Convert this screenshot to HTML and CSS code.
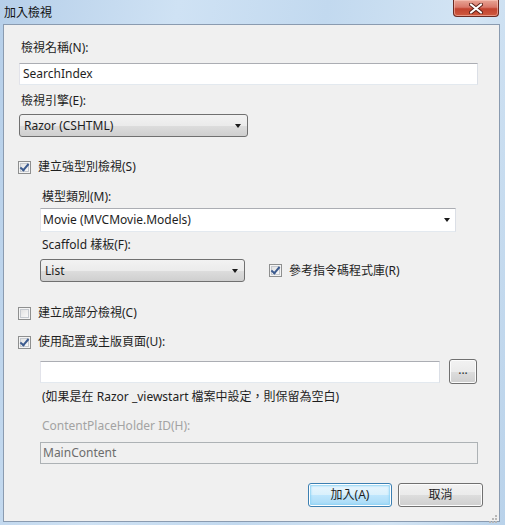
FILE: index.html
```html
<!DOCTYPE html>
<html lang="zh-Hant">
<head>
    <meta charset="UTF-8">
    <title>加入檢視</title>
    <link rel="stylesheet" href="styles.css">
</head>
<body>

    <div class="window">
        <!-- Заголовок окна -->
        <div class="titlebar">
            <span class="title">加入檢視</span>
            <div class="close-btn">
                <svg width="14" height="11" viewBox="0 0 14 11">
                    <path d="M2 1.5 L12 9.5 M12 1.5 L2 9.5" stroke="#5a2018" stroke-width="4" stroke-linecap="round"/>
                    <path d="M2 1.5 L12 9.5 M12 1.5 L2 9.5" stroke="#ffffff" stroke-width="2.2" stroke-linecap="round"/>
                </svg>
            </div>
        </div>

        <!-- Содержимое диалога -->
        <div class="client">
            <div class="lbl">檢視名稱(N):</div>
            <div class="textbox tb-name">SearchIndex</div>

            <div class="lbl lbl-engine">檢視引擎(E):</div>
            <div class="select sel-engine">Razor (CSHTML)<span class="arrow"></span></div>

            <div class="check-row cr-strong">
                <span class="checkbox checked"></span>
                <span>建立強型別檢視(S)</span>
            </div>

            <div class="indent">
                <div class="lbl lbl-model">模型類別(M):</div>
                <div class="combo">Movie (MVCMovie.Models)<span class="arrow"></span></div>

                <div class="lbl lbl-scaffold">Scaffold 樣板(F):</div>
                <div class="row row-scaffold">
                    <div class="select sel-list">List<span class="arrow"></span></div>
                    <div class="check-row cr-script">
                        <span class="checkbox checked"></span>
                        <span>參考指令碼程式庫(R)</span>
                    </div>
                </div>
            </div>

            <div class="check-row cr-partial">
                <span class="checkbox"></span>
                <span>建立成部分檢視(C)</span>
            </div>

            <div class="check-row cr-layout">
                <span class="checkbox checked"></span>
                <span>使用配置或主版頁面(U):</span>
            </div>

            <div class="indent">
                <div class="row row-layout">
                    <div class="textbox tb-layout"></div>
                    <div class="btn btn-browse">...</div>
                </div>
                <div class="lbl lbl-hint">(如果是在 Razor _viewstart 檔案中設定，則保留為空白)</div>

                <div class="lbl lbl-cph disabled">ContentPlaceHolder ID(H):</div>
                <div class="textbox tb-cph disabled">MainContent</div>
            </div>

            <div class="buttons">
                <div class="btn btn-default">加入(A)</div>
                <div class="btn btn-cancel">取消</div>
            </div>

            <div class="grip">
                <svg width="9" height="9" viewBox="0 0 9 9">
                    <rect x="6" y="0" width="2" height="2" fill="#b8b8b8"/>
                    <rect x="3" y="3" width="2" height="2" fill="#b8b8b8"/>
                    <rect x="6" y="3" width="2" height="2" fill="#b8b8b8"/>
                    <rect x="0" y="6" width="2" height="2" fill="#b8b8b8"/>
                    <rect x="3" y="6" width="2" height="2" fill="#b8b8b8"/>
                    <rect x="6" y="6" width="2" height="2" fill="#b8b8b8"/>
                </svg>
            </div>
        </div>
    </div>

</body>
</html>
```

FILE: styles.css
```css
body {
    margin: 0;
    padding: 0;
    font-family: "Noto Sans", "Noto Sans CJK TC", sans-serif;
    font-size: 12px;
    color: #1e1e1e;
}

/* Окно */
.window {
    width: 505px;
    height: 525px;
    display: flex;
    flex-direction: column;
    background: linear-gradient(100deg, #b6cfe9 0%, #cfe2f4 30%, #c2d9ef 55%, #d4e5f4 80%, #b9d2ea 100%);
    overflow: hidden;
}

.titlebar {
    height: 24px;
    display: flex;
    justify-content: space-between;
    align-items: flex-start;
}

.title {
    padding: 5px 0 0 4px;
    font-size: 12px;
    line-height: 16px;
    color: #111;
}

.close-btn {
    width: 46px;
    height: 17px;
    margin-right: 6px;
    box-sizing: border-box;
    border: 1px solid #6b2a22;
    border-top: none;
    border-radius: 0 0 4px 4px;
    background: linear-gradient(#e8a596 0%, #d9786a 45%, #c2432f 55%, #cf5a3f 100%);
    box-shadow: inset 0 0 0 1px rgba(255, 210, 200, 0.5);
    display: flex;
    align-items: center;
    justify-content: center;
}

.client {
    flex: 1;
    margin: 0 5px 3px 3px;
    border: 1px solid #8a9bb0;
    background: #f0f0f0;
    padding: 15px 21px 0 15px;
    position: relative;
}

.lbl {
    line-height: 16px;
    padding-left: 2px;
    white-space: nowrap;
}

.disabled {
    color: #a3a3a3;
}

/* Поля ввода */
.textbox {
    box-sizing: border-box;
    height: 22px;
    background: #fff;
    border: 1px solid;
    border-color: #abadb3 #dbdfe6 #e3e9ef #e2e3ea;
    padding: 0 3px;
    line-height: 20px;
}

.tb-name {
    margin-top: 7px;
}

.lbl-engine {
    margin-top: 8px;
}

.select {
    box-sizing: border-box;
    height: 23px;
    border: 1px solid #707070;
    border-radius: 3px;
    background: linear-gradient(#f2f2f2 0%, #ebebeb 50%, #dddddd 51%, #cfcfcf 100%);
    padding: 0 4px;
    line-height: 21px;
    position: relative;
}

.sel-engine {
    width: 229px;
    margin-top: 5px;
}

.arrow {
    position: absolute;
    right: 6px;
    top: 9px;
    width: 0;
    height: 0;
    border-left: 3.5px solid transparent;
    border-right: 3.5px solid transparent;
    border-top: 4px solid #1a1a1a;
}

.combo {
    box-sizing: border-box;
    width: 416px;
    height: 24px;
    margin-top: 3px;
    background: #fff;
    border: 1px solid;
    border-color: #abadb3 #dbdfe6 #e3e9ef #e2e3ea;
    padding: 0 2px;
    line-height: 22px;
    position: relative;
}

.combo .arrow {
    right: 5px;
}

/* Флажки */
.check-row {
    display: flex;
    align-items: center;
    height: 16px;
    line-height: 16px;
    white-space: nowrap;
}

.checkbox {
    box-sizing: border-box;
    width: 13px;
    height: 13px;
    margin-left: -1px;
    margin-right: 7px;
    border: 1px solid #8e8f8f;
    background: linear-gradient(135deg, #dcdcdc, #ffffff);
    box-shadow: inset 0 0 0 1px #f4f4f4, inset 0 0 0 2px #c5c9cf;
    position: relative;
}

.checkbox.checked::after {
    content: "";
    position: absolute;
    left: 3px;
    top: 0px;
    width: 3px;
    height: 7px;
    border-right: 2px solid #3c5b8f;
    border-bottom: 2px solid #3c5b8f;
    transform: rotate(40deg);
}

.cr-strong {
    margin-top: 22px;
}

.indent {
    margin-left: 21px;
}

.lbl-model {
    margin-top: 14px;
}

.lbl-scaffold {
    margin-top: 5px;
}

.row {
    display: flex;
    align-items: center;
}

.row-scaffold {
    margin-top: 6px;
}

.sel-list {
    width: 205px;
}

.cr-script {
    margin-left: 25px;
}

.cr-partial {
    margin-top: 23px;
}

.cr-layout {
    margin-top: 13px;
}

.row-layout {
    margin-top: 9px;
    height: 25px;
}

.tb-layout {
    width: 400px;
}

/* Кнопки */
.btn {
    box-sizing: border-box;
    border: 1px solid #707070;
    border-radius: 3px;
    background: linear-gradient(#f2f2f2 0%, #ebebeb 50%, #dddddd 51%, #cfcfcf 100%);
    box-shadow: inset 0 0 0 1px #fcfcfc;
    text-align: center;
}

.btn-browse {
    width: 28px;
    height: 25px;
    margin-left: 9px;
    line-height: 20px;
    color: #333;
}

.lbl-hint {
    margin-top: 5px;
}

.lbl-cph {
    margin-top: 13px;
}

.tb-cph {
    margin-top: 8px;
    width: 438px;
    background: #f0f0f0;
    border: 1px solid #adb2b5;
    color: #6d6d6d;
    padding-left: 2px;
}

.buttons {
    display: flex;
    justify-content: flex-end;
    gap: 6px;
    margin-top: 19px;
    margin-right: -5px;
}

.buttons .btn {
    height: 24px;
    line-height: 22px;
}

.btn-default {
    width: 84px;
    border-color: #3c7fb1;
    background: linear-gradient(#eaf6fd 0%, #d9f0fc 50%, #bee6fd 51%, #a7d9f5 100%);
    box-shadow: inset 0 0 0 1px #fff, inset 0 0 2px 2px #8fd3f5;
}

.btn-cancel {
    width: 85px;
}

.grip {
    position: absolute;
    right: 1px;
    bottom: 1px;
    width: 9px;
    height: 9px;
}
```
